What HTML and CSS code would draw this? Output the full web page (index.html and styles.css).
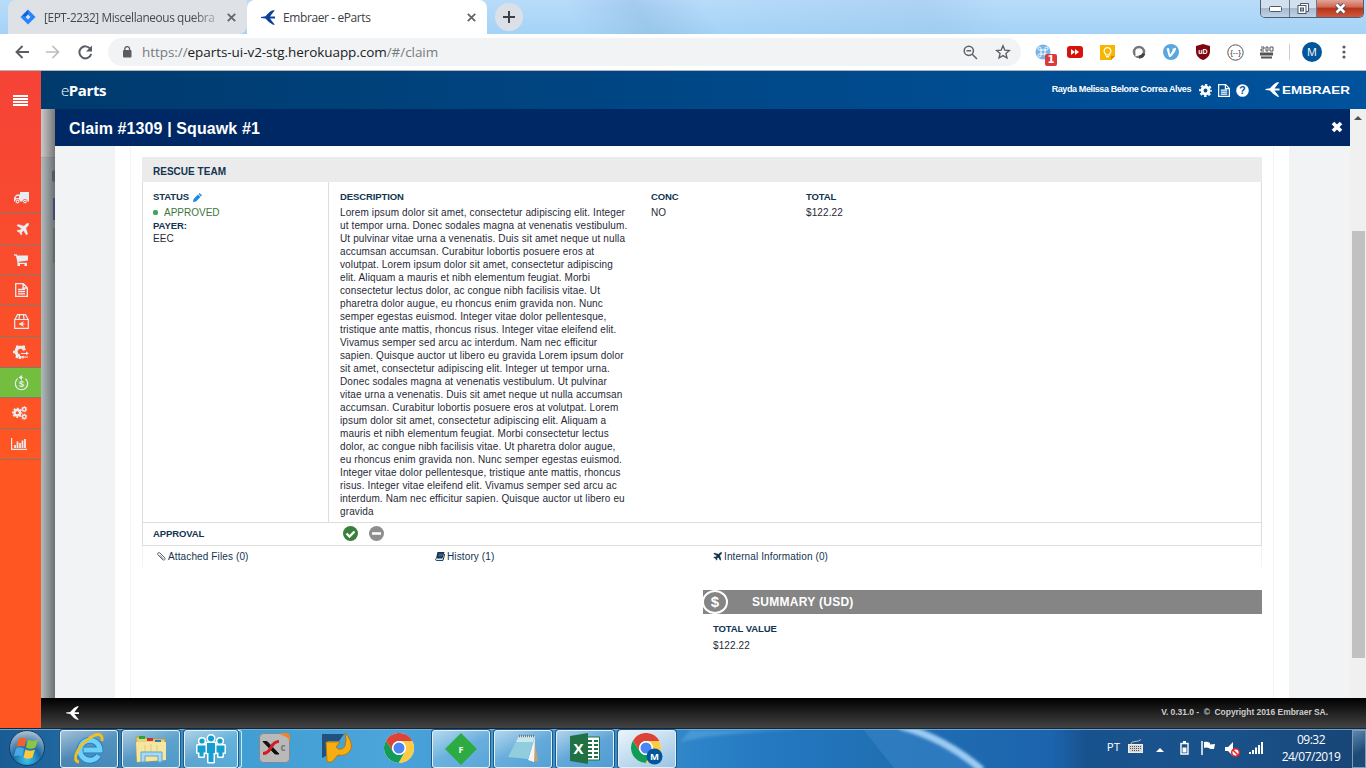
FILE: index.html
```html
<!DOCTYPE html>
<html lang="en">
<head>
<meta charset="utf-8">
<title>Embraer - eParts</title>
<link rel="stylesheet" href="styles.css">
</head>
<body>
<svg class="defs" width="0" height="0">
  <defs>
    <symbol id="chrome" viewBox="0 0 30 30">
      <circle cx="15" cy="15" r="15" fill="#fff"/>
      <path d="M15 8 H28.3 A15 15 0 0 1 14.5 30 L21 18.5 A7 7 0 0 0 15 8Z" fill="#fccd44"/>
      <path d="M2 7.5 A15 15 0 0 0 14.5 30 L21 18.5 A7 7 0 0 1 9 18.5 Z" fill="#119d58"/>
      <path d="M2 7.5 L9 18.5 A7 7 0 0 1 15 8 H28.3 A15 15 0 0 0 2 7.5Z" fill="#dc4437"/>
      <circle cx="15" cy="15" r="6.9" fill="#fff"/><circle cx="15" cy="15" r="5.5" fill="#4a86f3"/>
    </symbol>
    <symbol id="plane" viewBox="0 0 14 14"><path d="M13.5.5c.5.7 0 2-1 3L10.600 5.400l1.900 6.400-1.300 1.200-3.100-5-2 2 .3 2-.9.9-1.700-2.800L1 8.500l.9-.9 2.100.3 2-2L1 2.800l1.200-1.300 6.400 1.900L10.500 1.500c1-1 2.400-1.500 3-1z" fill="currentColor" stroke="currentColor" stroke-width=".5"/></symbol>
    <symbol id="doc" viewBox="0 0 13 14"><path d="M.7.7h7.600l4 4v8.600H.7z M8 .7v4.300h4.300 M3 6.500h7M3 8.700h7M3 10.900h7" fill="none" stroke="currentColor" stroke-width="1.300"/></symbol>
    <symbol id="gear" viewBox="0 0 14 14"><circle cx="7" cy="7" r="3.700" fill="none" stroke="currentColor" stroke-width="3.200"/><circle cx="7" cy="7" r="6" fill="none" stroke="currentColor" stroke-width="2" stroke-dasharray="2.600 2.112" stroke-dashoffset="1.300"/></symbol>
    <symbol id="bird" viewBox="0 0 14 15"><path d="M0 7 L4.500 6.300 Q8 1.500 12 .2 H13.800 L9 6.600 H14 V8.600 H9 L13.800 14.800 H12 Q8 13 4.500 8.500 L0 7.900 Z" fill="currentColor"/></symbol>
  </defs>
</svg>

<div class="tabstrip">
  <div class="tab tab-idle">
    <svg width="16" height="16" viewBox="0 0 16 16"><path d="M8 .5 15.500 8 8 15.500 .5 8z" fill="#2684ff"/><path d="M8 1v5l-2 2-3.500-1.500z" fill="#1260d8"/><path d="M8 5.500 10.500 8 8 10.500 5.500 8z" fill="#dee1e6"/></svg>
    <span class="tab-title fade">[EPT-2232] Miscellaneous quebra</span>
    <svg class="x" width="9" height="9" viewBox="0 0 9 9"><path d="M.8.8l7.400 7.400M8.200.8.8 8.200" stroke="#5f6368" stroke-width="1.700"/></svg>
  </div>
  <div class="tab tab-active">
    <svg class="tab-bird" width="14" height="15"><use href="#bird"/></svg>
    <span class="tab-title">Embraer - eParts</span>
    <svg class="x" width="9" height="9" viewBox="0 0 9 9"><path d="M.8.8l7.400 7.400M8.200.8.8 8.200" stroke="#5f6368" stroke-width="1.700"/></svg>
  </div>
  <div class="newtab"><svg width="12" height="12" viewBox="0 0 12 12"><path d="M6 0v12M0 6h12" stroke="#3c4043" stroke-width="2"/></svg></div>
  <div class="winbtns">
    <span class="wb w1"><svg width="13" height="6"><rect x=".5" y=".5" width="12" height="5" rx="1" fill="#fff" stroke="#50566a"/></svg></span>
    <span class="wb w2"><svg width="13" height="13" viewBox="0 0 13 13"><path d="M3.500 1.500h8v8h-8z" fill="#fff" stroke="#50566a"/><rect x="1" y="3.500" width="8" height="8" fill="#fff" stroke="#50566a"/><rect x="3.500" y="6" width="3" height="3" fill="#9bb" stroke="#50566a"/></svg></span>
    <span class="wb w3"><svg width="13" height="11" viewBox="0 0 13 11"><path d="M2.500 1.500l8 8M10.500 1.500l-8 8" stroke="#464b60" stroke-width="4.500"/><path d="M2.500 1.500l8 8M10.500 1.500l-8 8" stroke="#fff" stroke-width="2.600"/></svg></span>
  </div>
</div>

<div class="toolbar">
  <svg class="nav n1" width="14" height="14" viewBox="0 0 14 14"><path d="M14 7H1.500M7.500 1 1.500 7l6 6" fill="none" stroke="#5a5e63" stroke-width="1.900"/></svg>
  <svg class="nav n2" width="14" height="14" viewBox="0 0 14 14"><path d="M0 7h12.500M6.500 1l6 6-6 6" fill="none" stroke="#babcbe" stroke-width="1.700"/></svg>
  <svg class="nav n3" width="15" height="15" viewBox="0 0 15 15"><path d="M12.400 4A6 6 0 1 0 13.200 9" fill="none" stroke="#5a5e63" stroke-width="2"/><path d="M14 .5v6H8z" fill="#5a5e63"/></svg>
  <div class="omnibox">
    <svg width="10" height="12" viewBox="0 0 10 12"><rect x="1" y="4" width="8.500" height="7.500" rx="1" fill="#5a5e63"/><path d="M2.800 5V3a2.400 2.400 0 0 1 4.800 0v2" fill="none" stroke="#5a5e63" stroke-width="1.300"/></svg>
    <span class="url">https://<b>eparts-ui-v2-stg.herokuapp.com</b>/#/claim</span>
    <svg class="zoomico" width="15" height="15" viewBox="0 0 15 15"><circle cx="5.800" cy="5.800" r="4.600" fill="none" stroke="#5f6368" stroke-width="1.500"/><path d="M9 9l5 5M3.500 5.800h4.600" stroke="#5f6368" stroke-width="1.500"/></svg>
    <svg width="16" height="16" viewBox="0 0 16 16"><path d="M8 1.800l1.800 4.300 4.600.4-3.500 3 1.100 4.500-4-2.400L4 14l1.100-4.500-3.500-3 4.600-.4z" fill="none" stroke="#5a5e63" stroke-width="1.300"/></svg>
  </div>
  <div class="exts">
    <span class="ext e1"><svg width="16" height="16" viewBox="0 0 16 16"><circle cx="8" cy="8" r="7.500" fill="#77b4e8"/><path d="M6 6h4v4H6zM6 6H4.500A1.500 1.500 0 1 1 6 4.500V6M10 6V4.500A1.500 1.500 0 1 1 11.500 6H10M10 10h1.500a1.500 1.500 0 1 1-1.500 1.500V10M6 10v1.500A1.500 1.500 0 1 1 4.500 10H6" stroke="#fff" fill="none"/></svg><i>1</i></span>
    <span class="ext"><svg width="16" height="12" viewBox="0 0 16 12"><rect width="16" height="12" rx="3" fill="#d9110b"/><path d="M4 3l4 3-4 3zM8 3l4 3-4 3z" fill="#fff"/></svg></span>
    <span class="ext"><svg width="15" height="15" viewBox="0 0 15 15"><path d="M0 0h15v11l-4 4H0z" fill="#f8b602"/><path d="M15 11l-4 4v-4z" fill="#d98800"/><path d="M5.700 9a3.400 3.400 0 1 1 3.600 0v1H5.700zM6 11.700h3" fill="none" stroke="#fff" stroke-width="1.200"/></svg></span>
    <span class="ext"><svg width="14" height="14" viewBox="0 0 14 14"><circle cx="7" cy="7" r="5" fill="#fff" stroke="#777" stroke-width="2.500"/><path d="M11.800 8.500A5 5 0 0 1 7 12" fill="none" stroke="#444" stroke-width="3"/><path d="M3 11.500l1-3 2.500 2z" fill="#fff"/></svg></span>
    <span class="ext"><svg width="16" height="16" viewBox="0 0 16 16"><circle cx="8" cy="8" r="8" fill="#5aa7df"/><path d="M3.500 4.500 6 4l1 6.500 3-4.500-1-1 4-1.200c.5 2-2 6-5.500 9.200H6z" fill="#fff"/></svg></span>
    <span class="ext"><svg width="14" height="16" viewBox="0 0 14 16"><path d="M7 0l7 2v5c0 5-3 7.500-7 9-4-1.500-7-4-7-9V2z" fill="#800610"/><text x="7" y="9.800" font-size="7" font-weight="700" fill="#fff" text-anchor="middle">uD</text></svg></span>
    <span class="ext"><svg width="17" height="17" viewBox="0 0 17 17"><circle cx="8.500" cy="8.500" r="7.700" fill="#fff" stroke="#555"/><text x="8.500" y="11" font-size="8" fill="#333" text-anchor="middle">{--}</text></svg></span>
    <span class="ext"><svg width="14" height="13" viewBox="0 0 14 13"><path d="M1 1h3v2H1v2h3M6 1h2v4H6zM10 1h3v4h-3z" fill="none" stroke="#555"/><path d="M0 6.500h13v3H0zM1 10.500h11v2H1z" fill="#555"/></svg></span>
    <span class="sep"></span>
    <span class="avatar">M</span>
    <svg class="dots" width="4" height="14" viewBox="0 0 4 14"><g fill="#5a5e63"><circle cx="2" cy="2" r="1.600"/><circle cx="2" cy="7" r="1.600"/><circle cx="2" cy="12" r="1.600"/></g></svg>
  </div>
</div>

<div class="app">
  <nav class="side">
    <div class="burger"><i></i><i></i><i></i><i></i></div>
    <a class="si"><svg width="15" height="12" viewBox="0 0 15 12"><path d="M6 0h9v9.500H0V5.500L2.500 2.500H6z" fill="currentColor"/><path d="M1.700 5.500 3 4h2v2H1.700z" fill="#f9472f"/><circle cx="3.500" cy="9.500" r="2.200" fill="currentColor" stroke="#f9472f" stroke-width=".7"/><circle cx="11" cy="9.500" r="2.200" fill="currentColor" stroke="#f9472f" stroke-width=".7"/><circle cx="3.500" cy="9.500" r=".8" fill="#f9472f"/><circle cx="11" cy="9.500" r=".8" fill="#f9472f"/></svg></a>
    <a class="si nudge"><svg width="13" height="13"><use href="#plane"/></svg></a>
    <a class="si short"><svg width="14" height="12" viewBox="0 0 14 12"><path d="M0 .3h2.800l.4 1.300H14v5L4.600 7.700l.2 1H13V10H3.700L2 1.700H0z" fill="currentColor"/><rect x="3.500" y="9.500" width="2.500" height="2.500" fill="currentColor"/><rect x="10.500" y="9.500" width="2.500" height="2.500" fill="currentColor"/></svg></a>
    <a class="si"><svg width="13" height="14"><use href="#doc"/></svg></a>
    <a class="si"><svg width="15" height="15" viewBox="0 0 15 15"><path d="M.7 5.500h13.600v8.800H.7zM1 5.300 3.500.7h8L14 5.300M5.500.7 5 5M9.500.7l.5 4.300" fill="none" stroke="currentColor" stroke-width="1.200"/><path d="M4.500 10 10 7 8.500 9.500h2v1h-2L10 13z" fill="currentColor"/></svg></a>
    <a class="si"><svg width="16" height="15" viewBox="0 0 16 15"><path d="M11.500 5.200A4.300 4.300 0 1 0 7 10.800" fill="none" stroke="currentColor" stroke-width="3"/><path d="M10.500 2.800 11 .5M4.500 2.800 4 .5M2.500 7H0M4.500 10.500 3.500 13M7 11v3" stroke="currentColor" stroke-width="2.500"/><path d="M8 8.500h7M15 12H8.500" stroke="currentColor"/><path d="M13 6.500 15.800 8.500 13 10zM10.500 10.500 8 12l2.500 2z" fill="currentColor"/></svg></a>
    <a class="si short on"><svg width="15" height="16" viewBox="0 0 15 16"><path d="M3.500 3.800A6.200 6.200 0 1 0 11.500 3.800 M5 2.500h4" fill="none" stroke="currentColor" stroke-width="1.200"/><path d="M4.500 2.500 8 0v5z" fill="currentColor"/><text x="7.500" y="12.300" font-size="9" font-weight="700" fill="currentColor" text-anchor="middle">$</text></svg></a>
    <a class="si cogs"><svg width="16" height="14" viewBox="0 0 16 14"><svg x="0" y="1.500" width="10.500" height="10.500" viewBox="0 0 14 14"><use href="#gear"/></svg><svg x="9" y="0" width="6.500" height="6.500" viewBox="0 0 14 14"><use href="#gear"/></svg><svg x="9" y="7.500" width="6.500" height="6.500" viewBox="0 0 14 14"><use href="#gear"/></svg></svg></a>
    <a class="si bars"><svg width="16" height="12" viewBox="0 0 16 12"><path d="M.6 0v11.300H16" fill="none" stroke="currentColor" stroke-width="1.200"/><path d="M4 10V7M6.500 10V3.500M9 10V5M11.500 10V2.500M14 10V1" stroke="currentColor" stroke-width="1.800"/></svg></a>
  </nav>

  <div class="main">
    <header class="top">
      <span class="brand">e<b>Parts</b></span>
      <span class="user">Rayda Melissa Belone Correa Alves</span>
      <svg class="t-gear" width="13" height="13"><use href="#gear"/></svg>
      <svg class="t-doc" width="12" height="13"><use href="#doc"/></svg>
      <svg class="t-q" width="13" height="13" viewBox="0 0 13 13"><circle cx="6.500" cy="6.500" r="6.300" fill="#fff"/><text x="6.500" y="10.300" font-size="10.500" font-weight="700" fill="#004f98" text-anchor="middle">?</text></svg>
      <svg class="logo" width="86" height="16" viewBox="0 0 86 16"><svg width="15" height="15"><use href="#bird"/></svg><text x="17" y="11.500" font-size="10.500" font-weight="700" fill="#fff" textLength="68" lengthAdjust="spacingAndGlyphs">EMBRAER</text></svg>
    </header>

    <div class="stage">
      <div class="behind"><span class="b1"></span><span class="b2"></span><span class="b3"></span></div>
      <section class="modal">
        <div class="mhead"><h1>Claim #1309 | Squawk #1</h1>
          <svg width="12" height="12" viewBox="0 0 12 12"><path d="M2 2l8 8M10 2l-8 8" stroke="#fff" stroke-width="3.700"/></svg></div>
        <div class="mbody">
          <div class="sheet"><div class="inner">
            <div class="panel">
              <div class="phead">RESCUE TEAM</div>
              <div class="row">
                <div class="c1">
                  <h2>STATUS <svg width="9" height="9" viewBox="0 0 9 9"><path d="M0 9l.6-3L5 1.600 7.400 4 3 8.400zM5.600 1 6.600 0 9 2.400l-1 1z" fill="#1e88e5"/></svg></h2>
                  <div class="ok"><i></i>APPROVED</div>
                  <h2 class="payer">PAYER:</h2>
                  <div>EEC</div>
                </div>
                <div class="c2"><h2>DESCRIPTION</h2>
                  <p>Lorem ipsum dolor sit amet, consectetur adipiscing elit. Integer<br>ut tempor urna. Donec sodales magna at venenatis vestibulum.<br>Ut pulvinar vitae urna a venenatis. Duis sit amet neque ut nulla<br>accumsan accumsan. Curabitur lobortis posuere eros at<br>volutpat. Lorem ipsum dolor sit amet, consectetur adipiscing<br>elit. Aliquam a mauris et nibh elementum feugiat. Morbi<br>consectetur lectus dolor, ac congue nibh facilisis vitae. Ut<br>pharetra dolor augue, eu rhoncus enim gravida non. Nunc<br>semper egestas euismod. Integer vitae dolor pellentesque,<br>tristique ante mattis, rhoncus risus. Integer vitae eleifend elit.<br>Vivamus semper sed arcu ac interdum. Nam nec efficitur<br>sapien. Quisque auctor ut libero eu gravida Lorem ipsum dolor<br>sit amet, consectetur adipiscing elit. Integer ut tempor urna.<br>Donec sodales magna at venenatis vestibulum. Ut pulvinar<br>vitae urna a venenatis. Duis sit amet neque ut nulla accumsan<br>accumsan. Curabitur lobortis posuere eros at volutpat. Lorem<br>ipsum dolor sit amet, consectetur adipiscing elit. Aliquam a<br>mauris et nibh elementum feugiat. Morbi consectetur lectus<br>dolor, ac congue nibh facilisis vitae. Ut pharetra dolor augue,<br>eu rhoncus enim gravida non. Nunc semper egestas euismod.<br>Integer vitae dolor pellentesque, tristique ante mattis, rhoncus<br>risus. Integer vitae eleifend elit. Vivamus semper sed arcu ac<br>interdum. Nam nec efficitur sapien. Quisque auctor ut libero eu<br>gravida</p></div>
                <div class="c3"><h2>CONC</h2><div>NO</div></div>
                <div class="c4"><h2>TOTAL</h2><div>$122.22</div></div>
              </div>
              <div class="approval"><h2>APPROVAL</h2>
                <svg width="15" height="15" viewBox="0 0 15 15"><circle cx="7.500" cy="7.500" r="7.500" fill="#37803a"/><path d="M3.500 7.500l3 3 5-5" fill="none" stroke="#fff" stroke-width="2.300"/></svg>
                <svg width="15" height="15" viewBox="0 0 15 15"><circle cx="7.500" cy="7.500" r="7.500" fill="#8e8e8e"/><path d="M3 7.500h9" stroke="#fff" stroke-width="2.500"/></svg>
              </div>
              <div class="links">
                <span><svg width="9" height="9" viewBox="0 0 9 9"><path d="M2.500 3l4 4M3.500 1.500l4.500 4.500a1.500 1.500 0 0 1-2 2L1 3a1.400 1.400 0 0 1 2-2l4 4" fill="none" stroke="#4d6478" stroke-width=".9"/></svg>Attached Files (0)</span>
                <span><svg width="10" height="9" viewBox="0 0 10 9"><path d="M2.500 0h7L7.500 6.500H1z" fill="#0f3557"/><path d="M1 6.500C0 7 .5 8.400 1.500 8.400H8L9.700 2" fill="none" stroke="#0f3557"/><path d="M3.800 2.200h4M3.300 3.800h4" stroke="#7b90a3" stroke-width=".7"/></svg>History (1)</span>
                <span><svg width="9" height="9"><use href="#plane"/></svg>Internal Information (0)</span>
              </div>
            </div>
            <div class="summary">
              <div class="sbar"><span class="coin">$</span>SUMMARY (USD)</div>
              <h2>TOTAL VALUE</h2><div>$122.22</div>
            </div>
          </div></div>
        </div>
      </section>
      <div class="scroll"><i class="up"></i><i class="thumb"></i></div>
    </div>

    <footer class="foot"><svg width="13" height="14"><use href="#bird"/></svg><span>V. 0.31.0 -&nbsp; © &nbsp;Copyright 2016 Embraer SA.</span></footer>
  </div>
</div>

<div class="taskbar">
  <svg class="tbg" width="1366" height="40" viewBox="0 0 1366 40">
    <defs><linearGradient id="tg" x1="0" x2="1" y1="0" y2="0"><stop offset="0" stop-color="#195c95"/><stop offset=".04" stop-color="#1f669f"/><stop offset=".17" stop-color="#3f9ed2"/><stop offset=".28" stop-color="#4ba4da"/><stop offset=".48" stop-color="#338acb"/><stop offset=".56" stop-color="#2479c1"/><stop offset=".65" stop-color="#206fb3"/><stop offset=".77" stop-color="#1c64ae"/><stop offset=".795" stop-color="#18528e"/><stop offset=".9" stop-color="#1a528a"/><stop offset="1" stop-color="#174475"/></linearGradient><filter id="soft"><feGaussianBlur stdDeviation="1.500"/></filter></defs>
    <rect width="1366" height="40" fill="url(#tg)"/>
    <path d="M862 0 894 40H980Q945 8 906 0z" fill="#3580c4" opacity=".7"/>
    <path d="M900-2Q945 10 982 42" fill="none" stroke="#9ccaf2" stroke-width="7" filter="url(#soft)"/>
    <path d="M680 14Q720 4 800 2H690z" fill="#5aa6dc" opacity=".6" filter="url(#soft)"/>
    <path d="M0 .5h1366" stroke="#14263a"/><path d="M0 1.500h1366" stroke="#86b4d4" opacity=".8"/>
  </svg>
  <svg class="orb" width="38" height="38" viewBox="0 0 38 38"><defs><radialGradient id="og" cx=".5" cy=".85" r=".8"><stop offset="0" stop-color="#35c5f5"/><stop offset=".5" stop-color="#1c6aa5"/><stop offset="1" stop-color="#a4bccf"/></radialGradient></defs><circle cx="19" cy="19" r="17.500" fill="url(#og)" stroke="#173b5b"/><path d="M10.500 10q4-2.500 8 0l-2 8q-4-2-8 0z" fill="#f0632a"/><path d="M20 10.500q4.500 2.500 10 0l-2.500 8q-5 2.500-9.500 0z" fill="#8cc540"/><path d="M8 19.500q4-2.500 8 0l-2.200 8q-4-2-8 0z" fill="#4aa8e4"/><path d="M17.500 20.500q4.500 2.500 9.500 0l-2.500 8q-5 2.500-9 0z" fill="#fdc938"/></svg>
  <span class="tk k1"><svg width="32" height="32" viewBox="0 0 32 32"><path d="M25.500 22.500A10 10 0 1 1 27 17H10.500" fill="none" stroke="#1d7ac5" stroke-width="6.500"/><path d="M25.500 22.500A10 10 0 1 1 27 17H10.500" fill="none" stroke="#6fd0fa" stroke-width="5"/><path d="M6 29C-2 28 5 14 14 7S30-1 29 8" fill="none" stroke="#f4c01d" stroke-width="2.800"/></svg></span>
  <span class="tk k2"><svg width="32" height="30" viewBox="0 0 32 30"><path d="M1 3h9l2 2h18v21L2 28z" fill="#ecd27a" stroke="#b99a42"/><path d="M4 2h6v3H4z" fill="#23a543"/><path d="M12 4h6v3h-6z" fill="#c33"/><path d="M20 6h6v3h-6z" fill="#2b7cc0"/><path d="M1 8h30v18L2 28z" fill="#f6e5a0"/><path d="M10 11v12M16 10v12M22 11v12" stroke="#e3c976"/><path d="M6 28V18h21v10h-4v-6H10v6z" fill="#a9d9f2" stroke="#5aa7d3"/></svg></span>
  <span class="tk k3"><svg width="32" height="30" viewBox="0 0 32 30"><g fill="#fff" stroke="#fff" stroke-width="3" stroke-linejoin="round"><circle cx="16" cy="4.500" r="3"/><circle cx="7" cy="7" r="2.600"/><circle cx="25" cy="7" r="2.600"/><path d="M2.500 11.500h8v7H8.500v4h-4v-4h-2zM12 9h8v10h-1.500v9h-5v-9H12zM21.500 11.500h8v7h-2v4h-4v-4h-2z"/></g><g fill="#149fd0"><circle cx="16" cy="4.500" r="3"/><circle cx="7" cy="7" r="2.600"/><circle cx="25" cy="7" r="2.600"/><path d="M2.500 11.500h8v7H8.500v4h-4v-4h-2zM12 9h8v10h-1.500v9h-5v-9H12zM21.500 11.500h8v7h-2v4h-4v-4h-2z"/></g></svg></span><span class="stack"></span>
  <svg class="xc" width="31" height="30" viewBox="0 0 31 30"><rect x=".5" y=".5" width="30" height="29" rx="4" fill="#b9b9b9" stroke="#888"/><path d="M22 0h5q4 0 4 4v5q-2-6-9-7z" fill="#f58220"/><path d="M4 8.500h4l12 12.500h-4z" fill="#111" stroke="#111"/><path d="M20 8.500q-5 0-8 6T4 20.500" fill="none" stroke="#d31d24" stroke-width="3"/><text x="21.500" y="18" font-size="10" font-weight="700" fill="#777">c</text></svg>
  <svg class="arrows" width="34" height="30" viewBox="0 0 34 30"><path d="M2 1h22l-5 7H8v14l-6 3z" fill="#20517f"/><path d="M6 9h14l-4 5 2 2q5 1 7-3 2-6 0-13 8 8 6 16-4 8-13 6l-6 7H7z" fill="#f6ae13" stroke="#b77808"/></svg>
  <svg class="chr" width="30" height="30"><use href="#chrome"/></svg>
  <span class="tk k4"><svg width="32" height="32" viewBox="0 0 32 32"><path d="M16 0 32 16 16 32 0 16z" fill="#2cab43"/><text x="16" y="19.500" font-size="9" font-weight="700" fill="#fff" text-anchor="middle">F</text></svg></span>
  <span class="tk k5"><svg width="32" height="30" viewBox="0 0 32 30"><path d="M27 4l4 23-5 1z" fill="#c5a36d"/><path d="M28 3l-1 25-6-2z" fill="#f5f5f5"/><path d="M12 2h16l-7 23-20-2z" fill="#91cddd"/><path d="M12 2h16l-2 6H9z" fill="#c7e9ef"/><path d="M12 2h16" stroke="#777" stroke-width="2.500" stroke-dasharray="1 1"/></svg></span>
  <span class="tk k6"><svg width="30" height="31" viewBox="0 0 30 31"><path d="M16 4h13.500v23H16z" fill="#fff" stroke="#207245"/><path d="M18 8h4M24 8h4M18 12h4M24 12h4M18 16h4M24 16h4M18 20h4M24 20h4M18 24h4M24 24h4" stroke="#207245" stroke-width="2"/><path d="M0 3 18 0v31L0 28z" fill="#207245"/><text x="8.500" y="20.500" font-size="15" font-weight="700" fill="#fff" text-anchor="middle">X</text></svg></span>
  <span class="tk k7"><svg width="32" height="32" viewBox="0 0 32 32"><svg x="0" y="0" width="30" height="30"><use href="#chrome"/></svg><circle cx="23.500" cy="23.500" r="8" fill="#00559b"/><text x="23.500" y="27" font-size="9.500" font-weight="700" fill="#fff" text-anchor="middle">M</text></svg></span>
  <div class="tray">
    <span class="pt">PT</span>
    <svg class="y1" width="15" height="14" viewBox="0 0 15 14"><rect x=".5" y="5.500" width="14" height="8" fill="#d6d6d6" stroke="#eee"/><path d="M2 7.500h11M2 9.500h11M4 11.500h7" stroke="#555" stroke-dasharray="1 1"/><path d="M3 5q0-2.500 4-2.500t6-2" fill="none" stroke="#bbb"/></svg>
    <svg class="y2" width="8" height="4"><path d="M0 4 4 0l4 4z" fill="#fff"/></svg>
    <svg class="y3" width="9" height="14" viewBox="0 0 9 14"><path d="M1 2.500h7v10.500H1z" fill="none" stroke="#fff" stroke-width="1.400"/><path d="M3 0h3v2H3zM2.500 6.500h4V11.500h-4z" fill="#fff"/></svg>
    <svg class="y4" width="14" height="14" viewBox="0 0 14 14"><path d="M1 0v14" stroke="#fff" stroke-width="1.500"/><path d="M3 1q3-1 6 1v1.500l5-.5-1 5H9L8 7q-3-1-5 0z" fill="#fff"/></svg>
    <svg class="y5" width="15" height="15" viewBox="0 0 15 15"><path d="M0 5h3l5-5v14l-5-5H0z" fill="#fff"/><circle cx="10.500" cy="10.500" r="3.800" fill="#fff" stroke="#e0232b" stroke-width="1.500"/><path d="M8 8l5 5" stroke="#e0232b" stroke-width="1.500"/></svg>
    <svg class="y6" width="15" height="12" viewBox="0 0 15 12"><path d="M1 12v-2M4 12V8M7 12V5.500M10 12V3M13 12V0" stroke="#fff" stroke-width="2"/></svg>
    <div class="clock">09:32<br>24/07/2019</div>
    <span class="peek"></span>
  </div>
</div>
</body>
</html>
```
FILE: styles.css
```css
* { box-sizing: border-box; }
body { margin: 0; width: 1366px; height: 768px; overflow: hidden; display: flex; flex-direction: column; font-family: "Liberation Sans", Arial, sans-serif; background: #fff; }
svg { display: block; flex: none; }
.defs { position: absolute; }

.tabstrip { height: 34px; flex: none; display: flex; align-items: flex-start; font-family: "Open Sans", sans-serif; padding-left: 8px;
  background: linear-gradient(60deg, transparent 42%, rgba(130,175,215,.35) 47%, transparent 52%, rgba(150,190,225,.3) 68%, transparent 73%), linear-gradient(180deg, #b9dbfa, #a3d3f6); }
.tab { height: 34px; width: 239px; display: flex; align-items: center; border-radius: 8px; font-size: 12px; color: #45494d; padding-left: 12px; }
.tab-idle { background: #dee1e6; border-radius: 8px 0 8px 0; }
.tab-active { background: #fff; width: 240px; border-radius: 8px 8px 0 0; padding-left: 14px; color: #3c4043; }
.tab-bird { color: #0c419a; }
.tab-title { margin-left: 8px; width: 178px; flex: none; white-space: nowrap; letter-spacing: -.4px; }
.tab-active .tab-title { margin-left: 8px; width: 183px; }
.tab-title.fade { -webkit-mask-image: linear-gradient(90deg, #000 84%, rgba(0,0,0,.2) 100%); width: 176px; font-size: 11.800px; letter-spacing: -.38px; }
.x { margin-left: auto; margin-right: 11px; }
.newtab { width: 28px; height: 28px; margin: 3px 0 0 8px; border-radius: 50%; background: #dbe0e8; display: flex; align-items: center; justify-content: center; }
.winbtns { margin-left: auto; margin-right: 2px; height: 18px; display: flex; border: 1px solid #4d5e74; border-top: 0; border-radius: 0 0 5px 5px; overflow: hidden; width: 104px; }
.wb { display: flex; align-items: center; justify-content: center; background: linear-gradient(#d2dfed 45%, #a7bad0 50%, #bfd3e8); border-right: 1px solid #667990; }
.w1 { width: 29px; } .w2 { width: 27px; }
.w3 { flex: 1; border: 0; background: linear-gradient(#e3a496 0, #cf6a55 40%, #b93419 50%, #cf5a3d); }

.toolbar { height: 37px; flex: none; background: #fff; border-bottom: 1px solid #b3b5b8; display: flex; align-items: center; padding-left: 15px; }
.n2 { margin-left: 17px; } .n3 { margin-left: 18px; }
.omnibox { margin-left: 15px; width: 913px; height: 28px; border-radius: 14px; background: #f1f3f4; display: flex; align-items: center; padding: 0 10px 0 14px; }
.omnibox .zoomico { margin: 0 17px 0 auto; }
.url { font: 13.500px/20px "Open Sans", sans-serif; letter-spacing: -.06px; margin-left: 10px; color: #777b80; }
.url b { font-weight: 400; color: #202124; }
.exts { flex: 1; display: flex; align-items: center; padding-left: 6px; }
.exts text { font-family: "Liberation Sans", sans-serif; }
.ext { width: 32px; flex: none; display: flex; justify-content: center; }
.e1 { position: relative; }
.e1 i { position: absolute; left: 18px; top: 10px; width: 12px; height: 12px; border-radius: 2px; background: #da3a3c; color: #fff; font: 700 10px/12px "DejaVu Sans", sans-serif; text-align: center; }
.sep { width: 1px; height: 16px; background: #ccc; margin: 0 12px 0 6px; }
.avatar { width: 20px; height: 20px; border-radius: 50%; background: #00559b; color: #fff; font: 11px/20px "Open Sans", sans-serif; text-align: center; margin-right: 20px; }

.app { height: 657px; flex: none; display: flex; }
.side { width: 41px; flex: none; background: linear-gradient(#f54337, #ff5622 60%); color: #e9edf2; }
.burger { width: 15px; margin: 0 0 0 13px; padding-top: 24px; height: 112px; }
.burger i { display: block; height: 2px; background: #fff; margin-bottom: 1px; }
.si { height: 31px; border-bottom: 1px solid #88786c; display: flex; align-items: center; justify-content: center; }
.short { height: 30px; }
.side .si { padding-left: 1px; }
.side .nudge { padding-left: 3px; }
.side .bars { padding: 0 3px 0 0; }
.side .cogs { padding: 0 1px 0 0; }
.on { background: #74be3f; }

.main { flex: 1; display: flex; flex-direction: column; min-width: 0; }
.top { height: 38px; flex: none; background: linear-gradient(90deg, #003a6d, #004a8c 60%, #00529d); color: #fff; display: flex; align-items: center; padding-right: 15px; }
.brand { font: 300 15px/20px "Open Sans", sans-serif; margin-left: 20px; letter-spacing: -.4px; }
.brand b { font-weight: 700; }
.user { margin-left: auto; font-size: 9px; font-weight: 700; letter-spacing: -.39px; margin-top: -2px; }
.t-gear { margin-left: 8px; } .t-doc { margin-left: 6px; } .t-q { margin-left: 6px; } .logo { margin-left: 16px; }
.stage { height: 589px; flex: none; display: flex; }
.behind { width: 14px; flex: none; display: flex; flex-direction: column; align-items: flex-end; background: linear-gradient(90deg, transparent, rgba(0,0,0,.4)), linear-gradient(#c9c9c9 48px, #a6abad 48px, #b3bbbd 49px); }
.b1 { margin-top: 61px; width: 3px; height: 12px; border-radius: 6px 0 0 6px; background: #555863; }
.b2 { margin-top: 16px; width: 2px; height: 22px; background: #3c4a78; }
.b3 { margin-top: 8px; width: 2px; height: 35px; background: #666; }
.modal { width: 1295px; flex: none; display: flex; flex-direction: column; }
.mhead { height: 37px; flex: none; background: #002864; display: flex; align-items: center; justify-content: space-between; padding: 0 7px 0 14px; }
.mhead h1 { margin: 2px 0 0; font-size: 16px; line-height: 20px; color: #fff; letter-spacing: .1px; }
.mhead svg { margin-top: -2px; }
.mbody { flex: 1; background: #f2f3f5; padding: 0 61px 0 60px; display: flex; }
.sheet { flex: 1; background: #fff; padding: 0 15px 0 15px; display: flex; }
.inner { flex: 1; border: solid #f4f4f5; border-width: 0 1px; padding: 11px 11px 0; font-size: 10px; line-height: 13px; color: #1f2a38; letter-spacing: .12px; }
.inner h2 { margin: 0; font-size: 9.500px; line-height: 13px; color: #12344f; letter-spacing: -.1px; }
.phead { height: 25px; background: #ebebeb; color: #12344f; font-size: 10px; font-weight: 700; line-height: 29px; padding-left: 11px; letter-spacing: .02px; }
.row { height: 341px; display: flex; border: 1px solid #ddd; border-top: 0; }
.inner .row h2 { padding-top: 8px; margin-bottom: 3px; }
.c1 { width: 186px; border-right: 1px solid #ddd; padding-left: 10px; }
.c1 h2 svg { display: inline-block; vertical-align: -2px; margin-left: 1px; }
.inner .row .payer { padding: 0; margin: 0; }
.ok { color: #3c763d; letter-spacing: 0; }
.ok i { display: inline-block; width: 5px; height: 5px; border-radius: 2px; background: #3ba55c; margin-right: 6px; vertical-align: 1px; }
.c2 { width: 311px; padding-left: 11px; white-space: nowrap; }
.c2 p { margin: 0; }
.c3 { width: 155px; padding-left: 11px; }
.c4 { padding-left: 11px; }
.approval { height: 23px; border: 1px solid #ddd; border-top: 0; display: flex; align-items: center; padding: 0 0 1px 10px; gap: 11px; }
.inner .approval h2 { width: 179px; }
.links { height: 21px; border: solid #f3f3f3; border-width: 0 1px; display: grid; grid-template-columns: 278px 278px 1fr; padding-left: 14px; color: #12344f; }
.links span { display: flex; align-items: center; gap: 2px; }
.summary { margin: 23px 0 0 561px; padding-left: 10px; }
.sbar { height: 24px; background: #858585; color: #fff; font-size: 12px; font-weight: 700; line-height: 24px; letter-spacing: .28px; margin: 0 0 8px -10px; display: flex; }
.coin { width: 26px; height: 24px; margin: 0 24px 0 -1px; border-radius: 50%; background: #858585; border: 2px solid #fff; font-size: 15px; line-height: 20px; text-align: center; letter-spacing: 0; }
.inner .summary h2 { margin-bottom: 4px; }
.scroll { flex: 1; background: #f0f0f0; padding: 7px 1px 0 2px; }
.up { display: block; margin: 0 0 0 2px; width: 0; border: 4px solid transparent; border-top: 0; border-bottom: 4px solid #505050; }
.thumb { display: block; margin-top: 111px; height: 427px; background: #c1c1c1; }
.foot { height: 30px; flex: none; background: linear-gradient(#000, #434343); color: #fff; display: flex; align-items: center; justify-content: space-between; padding: 0 38px 0 25px; font-size: 8.500px; font-weight: 700; letter-spacing: -.05px; }
.foot span { color: #ccc; margin-top: -2px; }

.taskbar { position: relative; height: 40px; flex: none; display: flex; align-items: center; color: #fff; }
.tbg { position: absolute; inset: 0; z-index: -1; }
.orb { margin-left: 8px; }
.tk { width: 58px; height: 38px; margin: 1px 0 0 4px; border: 1px solid #e1f1fb; border-radius: 3px; box-shadow: 0 0 0 1px #24587f; background: linear-gradient(155deg, rgba(255,255,255,.6), rgba(255,255,255,.2) 50%, rgba(255,255,255,.12)); display: flex; align-items: center; justify-content: center; }
.k1 { margin-left: 14px; }
.k3 { width: 54px; }
.stack { width: 4px; height: 38px; margin-top: 1px; border: 1px solid #cfe8f7; border-left: 0; border-radius: 0 3px 3px 0; }
.xc { margin-left: 17px; } .arrows { margin-left: 30px; } .chr { margin-left: 30px; }
.k4 { margin-left: 18px; }
.k7 { background: linear-gradient(155deg, rgba(255,255,255,.9), rgba(255,255,255,.5)); }
.taskbar text { font-family: "Open Sans", sans-serif; }
.tray { margin-left: auto; display: flex; align-items: center; font: 12px/17px "Open Sans", sans-serif; height: 40px; }
.pt { font-size: 11.500px; margin-top: -3px; }
.y1 { margin: -4px 0 0 8px; } .y2 { margin: 3px 0 0 13px; } .y3 { margin-left: 16px; } .y4 { margin-left: 12px; } .y5 { margin: 2px 0 0 10px; } .y6 { margin-left: 9px; }
.clock { width: 62px; margin-left: 16px; text-align: center; font-size: 12px; letter-spacing: -.5px; white-space: nowrap; }
.peek { width: 14px; height: 38px; margin: 2px 0 0 10px; border: 1px solid #7d9cb8; background: linear-gradient(150deg, #5e86aa, #1d4a77 60%); }
```
